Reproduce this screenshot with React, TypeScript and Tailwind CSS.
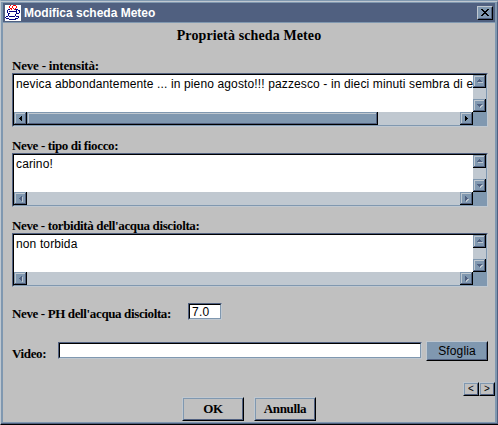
import React from "react";

type Dir = "left" | "right" | "up" | "down";

const arrows: Record<Dir, string> = {
  left: "M7 4h1v5h-1v-1h-1v-1h-1v-1h1v-1h1z",
  right: "M5 4h1v1h1v1h1v1h-1v1h-1v1h-1z",
  up: "M6 4h1v1h1v1h1v1h-5v-1h1v-1h1z",
  down: "M4 5h5v1h-1v1h-1v1h-1v-1h-1v-1h-1z",
};

function ArrowButton({ dir, active = false }: { dir: Dir; active?: boolean }) {
  return (
    <svg className="block size-[13px] shrink-0" viewBox="0 0 13 13" shapeRendering="crispEdges">
      <path d="M0 0h13v13H0z" fill="#000" />
      <path d="M0 0h12v12H0z" fill="#506080" />
      <path d="M0 0h11v11H0z" fill="#8098b0" />
      <path d="M0 0h12v1H1v11H0z" fill="#8098b0" />
      <path d="M1 1h10v1H2v9H1z" fill="#c0c8d0" />
      {!active && <path d={arrows[dir]} fill="#c0c8d0" transform="translate(1 1)" />}
      <path d={arrows[dir]} fill={active ? "#000" : "#506080"} />
    </svg>
  );
}

function Label({ children, className = "" }: { children: React.ReactNode; className?: string }) {
  return (
    <div className={`whitespace-nowrap font-['Liberation_Serif',serif] text-[13px] leading-[15px] font-bold ${className}`}>
      {children}
    </div>
  );
}

function TextArea({ text, scrollable = false }: { text: string; scrollable?: boolean }) {
  return (
    <div className="h-[54px] w-[476px] border border-t-[#506080] border-l-[#506080] border-r-[#c0c8d0] border-b-[#c0c8d0]">
      <div className="flex h-[52px] flex-col border border-t-black border-l-black border-r-[#8098b0] border-b-[#8098b0]">
        <div className="flex h-[37px]">
          <div className="min-w-0 grow overflow-hidden bg-white pt-px pl-0.5">
            <span className="block font-['Liberation_Sans',sans-serif] text-[12px] leading-[16px] tracking-[0.13px] whitespace-nowrap">{text}</span>
          </div>
          <div className="flex w-[13px] flex-col justify-between bg-[#c0c8d0]">
            <ArrowButton dir="up" />
            <ArrowButton dir="down" />
          </div>
        </div>
        <div className="flex h-[13px] bg-[#8098b0]">
          <ArrowButton dir="left" active={scrollable} />
          <div className="grow bg-[#c0c8d0]">
            {scrollable && (
              <div className="h-[13px] w-[351px] border-r border-b border-black">
                <div className="h-3 border border-t-[#8098b0] border-l-[#8098b0] border-r-[#506080] border-b-[#506080] bg-[#8098b0]">
                  <div className="h-2.5 border-t border-l border-[#c0c8d0]" />
                </div>
              </div>
            )}
          </div>
          <ArrowButton dir="right" active={scrollable} />
          <div className="w-[13px]" />
        </div>
      </div>
    </div>
  );
}

function Input({ value = "", className }: { value?: string; className: string }) {
  return (
    <div className={`h-[17px] border border-t-[#506080] border-l-[#506080] border-r-[#c0c8d0] border-b-[#c0c8d0] ${className}`}>
      <div className="h-[15px] border border-t-black border-l-black border-r-[#8098b0] border-b-[#8098b0] bg-white pl-0.5 font-['Liberation_Sans',sans-serif] text-[12px] leading-[15px] tracking-[0.3px]">
        {value}
      </div>
    </div>
  );
}

function Button({ children, className, inner }: { children: React.ReactNode; className: string; inner: string }) {
  return (
    <button className={`block border border-t-[#c0c8d0] border-l-[#c0c8d0] border-r-black border-b-black ${className}`}>
      <span className={`flex size-full items-center justify-center border border-r-[#506080] border-b-[#506080] ${inner}`}>{children}</span>
    </button>
  );
}

function JavaCup() {
  return (
    <svg className="block size-4" viewBox="0 0 16 16" shapeRendering="crispEdges">
      <path d="M0 0h16v16H0z" fill="#fff" />
      <path d="M5 0h1v1h-1zM8 0h3v1h-3zM4 1h1v2h-1zM7 1h1v2h-1zM11 1h1v2h-1zM5 3h2v1h-2zM8 3h1v1h-1zM10 3h1v1h-1zM6 4h1v1h-1zM9 4h1v1h-1z" fill="#f00" />
      <path d="M3 4h2v1h-2zM10 4h3v1h-3zM2 5h1v3h-1zM4 6h7v1h-7zM11 5h1v4h-1zM13 5h2v1h-2zM14 6h1v2h-1zM12 8h2v1h-2zM3 8h2v1h-2zM3 9h1v2h-1zM10 9h1v2h-1zM4 11h6v1h-6zM1 11h2v1h-2zM0 12h1v1h-1zM11 11h3v1h-3zM13 12h1v1h-1zM1 13h3v1h-3zM10 13h3v1h-3zM4 14h7v1h-7z" fill="#000080" />
    </svg>
  );
}

export default function App() {
  return (
    <div className="h-[425px] w-[498px] overflow-hidden border-t border-b border-l border-t-[#8098b0] border-b-black border-l-[#c0c8d0] bg-[#8098b0] text-black">
      <div className="h-[423px] border-t border-r border-b border-t-[#c0c8d0] border-r-[#506080] border-b-[#506080] pt-px pr-px pl-0.5">
        <div className="flex h-[419px] w-[492px] flex-col bg-[#c0c0c0]">
          <header className="flex h-5 shrink-0 items-center border-b border-[#8098b0] bg-[#506080] pl-0.5">
            <JavaCup />
            <span className="ml-[3px] font-['Liberation_Sans',sans-serif] text-[12px] leading-4 font-bold whitespace-nowrap text-white">Modifica scheda Meteo</span>
            <Button className="mr-0.5 ml-auto h-[14px] w-4" inner="border-t-[#8098b0] border-l-[#8098b0] bg-[#8098b0]">
              <svg className="size-2 shrink-0" viewBox="0 0 8 8" shapeRendering="crispEdges">
                <path d="M0 0h2v1h1v1h2V1h1V0h2v1H7v1H6v1H5v1h1v1h1v1h1v1H6V6H5V5H3v1H2v1H0V6h1V5h1V4h1V3H2V2H1V1H0z" fill="#000" />
              </svg>
            </Button>
          </header>
          <h1 className="mt-[5px] h-4 text-center font-['Liberation_Serif',serif] text-[14px] leading-4 font-bold tracking-[0.12px] whitespace-nowrap">Proprietà scheda Meteo</h1>
          <main className="flex flex-col pl-[9px]">
            <Label className="mt-[14px] tracking-[-0.2px]">Neve - intensità:</Label>
            <TextArea scrollable text="nevica abbondantemente ... in pieno agosto!!! pazzesco - in dieci minuti sembra di e" />
            <Label className="mt-[11px] tracking-[-0.36px]">Neve - tipo di fiocco:</Label>
            <TextArea text="carino!" />
            <Label className="mt-[11px] tracking-[-0.37px]">Neve - torbidità dell'acqua disciolta:</Label>
            <TextArea text="non torbida" />
            <div className="mt-4 flex h-[17px]">
              <Label className="mt-[3px] w-44 tracking-[-0.37px]">Neve - PH dell'acqua disciolta:</Label>
              <Input value="7.0" className="w-[34px]" />
            </div>
            <div className="mt-[21px] flex h-5">
              <Label className="mt-[5px] w-[46px] tracking-[-0.35px]">Video:</Label>
              <Input className="mt-px w-[364px]" />
              <Button className="ml-1 h-5 w-[62px] font-['Liberation_Sans',sans-serif] text-[12px] tracking-[0.15px]" inner="border-t-[#8098b0] border-l-[#8098b0] bg-[#8098b0]">Sfoglia</Button>
            </div>
          </main>
          <div className="mt-[21px] flex justify-end font-['Liberation_Sans',sans-serif] text-[10px] leading-none">
            <Button className="h-[14px] w-4" inner="border-t-[#8098b0] border-l-[#8098b0]">&lt;</Button>
            <Button className="h-[14px] w-4" inner="border-t-[#8098b0] border-l-[#8098b0]">&gt;</Button>
          </div>
          <footer className="mt-px ml-[179px] flex gap-2.5 font-['Liberation_Serif',serif] text-[13px] font-bold tracking-[-0.35px]">
            <Button className="h-6 w-[62px]" inner="border-t-[#8098b0] border-l-[#8098b0]">OK</Button>
            <Button className="h-6 w-[62px]" inner="border-t-[#8098b0] border-l-[#8098b0]">Annulla</Button>
          </footer>
        </div>
      </div>
    </div>
  );
}
